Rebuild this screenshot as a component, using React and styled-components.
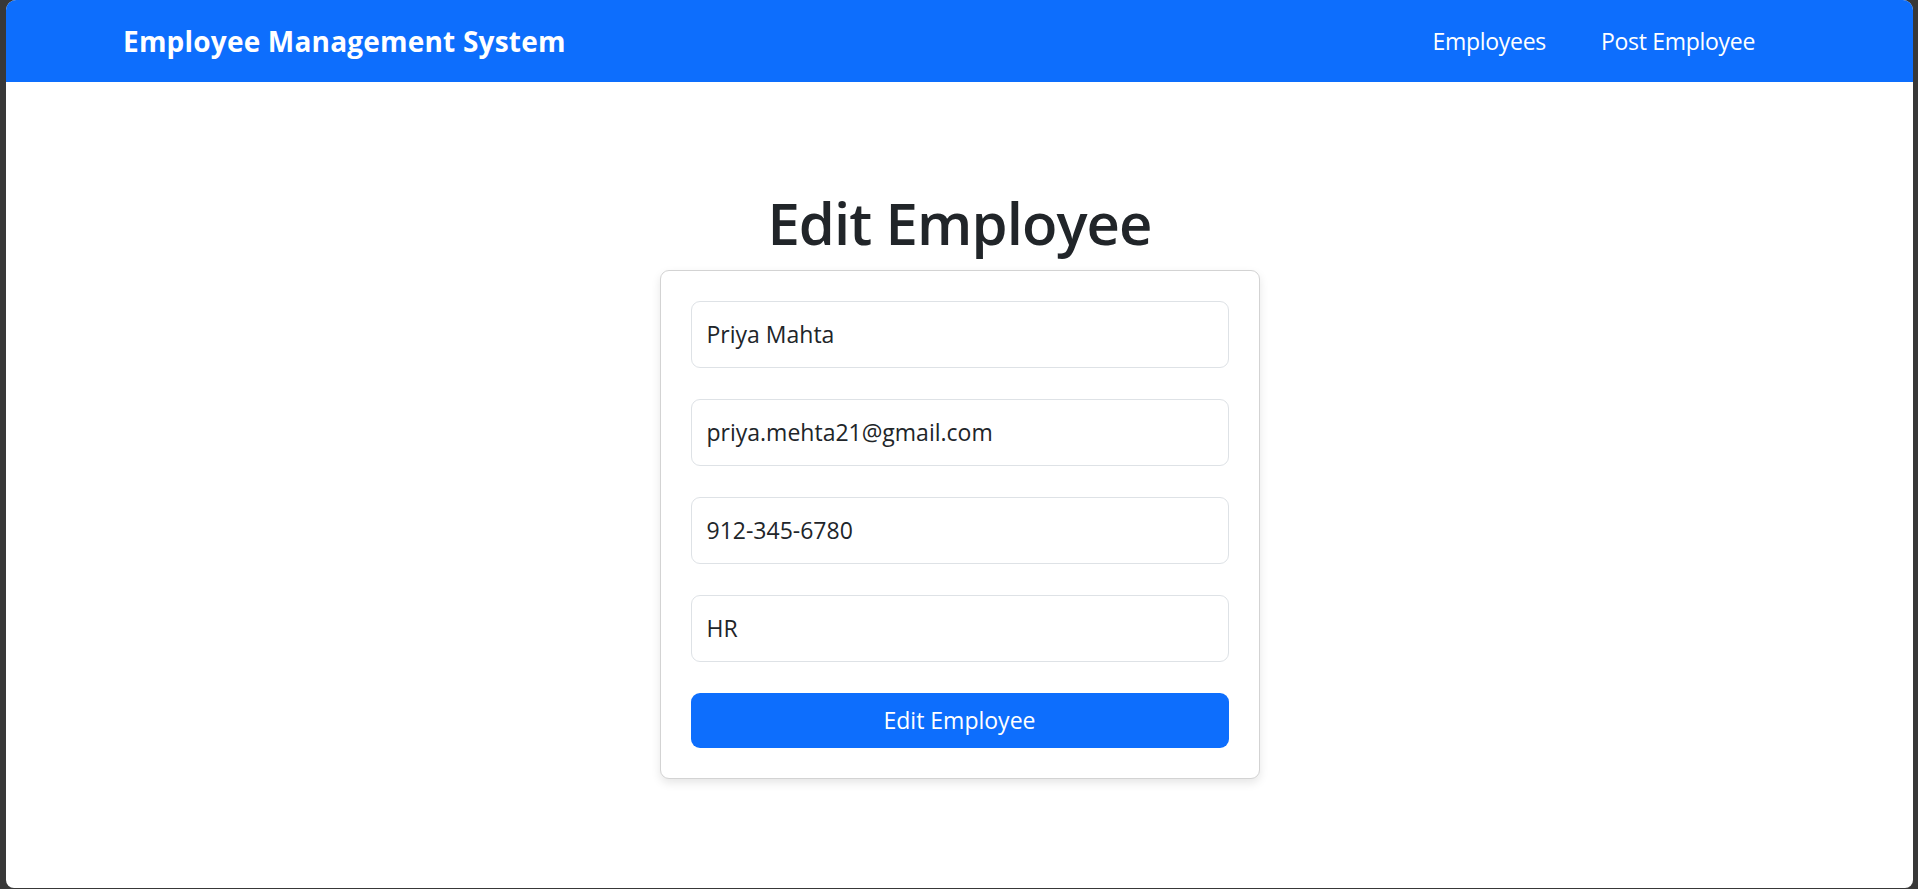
import React from "react";
import styled, { createGlobalStyle } from "styled-components";

const GlobalStyle = createGlobalStyle`
  html, body {
    margin: 0;
    padding: 0;
    background: #383838;
  }

  * {
    box-sizing: border-box;
  }
`;

const employee = {
  name: "Priya Mahta",
  email: "priya.mehta21@gmail.com",
  phone: "912-345-6780",
  department: "HR",
};

const App = () => {
  return (
    <>
      <GlobalStyle />
      <Frame>
        <Window>
          <Navbar>
            <Brand href="#">Employee Management System</Brand>
            <NavLinks>
              <NavLink href="#">Employees</NavLink>
              <NavLink href="#">Post Employee</NavLink>
            </NavLinks>
          </Navbar>
          <Main>
            <Title>Edit Employee</Title>
            <Card onSubmit={(e) => e.preventDefault()}>
              <Field type="text" name="name" defaultValue={employee.name} />
              <Field type="email" name="email" defaultValue={employee.email} />
              <Field type="text" name="phone" defaultValue={employee.phone} />
              <Field
                type="text"
                name="department"
                defaultValue={employee.department}
              />
              <SubmitButton type="submit">Edit Employee</SubmitButton>
            </Card>
          </Main>
        </Window>
      </Frame>
    </>
  );
};

const Frame = styled.div`
  height: 889px;
  padding: 0 5px 1px 6px;
  font-family: "Open Sans", "Noto Sans", sans-serif;
`;

const Window = styled.div`
  height: 100%;
  background: #ffffff;
  border-radius: 10px 10px 8px 8px;
  overflow: hidden;
`;

const Navbar = styled.nav`
  height: 82px;
  background-color: #0d6efd;
  display: flex;
  align-items: center;
  justify-content: space-between;
  padding: 0 158px 0 117px;
`;

const Brand = styled.a`
  color: #ffffff;
  font-size: 28px;
  font-weight: 700;
  text-decoration: none;
  letter-spacing: 0.2px;
`;

const NavLinks = styled.div`
  display: flex;
  align-items: center;
  gap: 55px;
`;

const NavLink = styled.a`
  color: #ffffff;
  font-size: 23px;
  text-decoration: none;
  letter-spacing: -0.3px;
`;

const Main = styled.main`
  display: flex;
  flex-direction: column;
  align-items: center;
  padding-top: 106px;
`;

const Title = styled.h1`
  margin: 0 0 12px;
  font-size: 58px;
  font-weight: 600;
  line-height: 1.2;
  color: #212529;
  letter-spacing: -0.9px;
`;

const Card = styled.form`
  width: 600px;
  padding: 30px;
  display: flex;
  flex-direction: column;
  gap: 31px;
  background: #ffffff;
  border: 1px solid #d3d3d3;
  border-radius: 9px;
  box-shadow: 0 4px 10px rgba(0, 0, 0, 0.1);
`;

const Field = styled.input`
  height: 67px;
  width: 100%;
  padding: 0 15px;
  font-family: inherit;
  font-size: 23px;
  color: #212529;
  background: #ffffff;
  border: 1px solid #dee2e6;
  border-radius: 9px;
  outline: none;
`;

const SubmitButton = styled.button`
  height: 55px;
  width: 100%;
  font-family: inherit;
  font-size: 23px;
  color: #ffffff;
  background-color: #0d6efd;
  border: none;
  border-radius: 9px;
  cursor: pointer;
`;

export default App;
